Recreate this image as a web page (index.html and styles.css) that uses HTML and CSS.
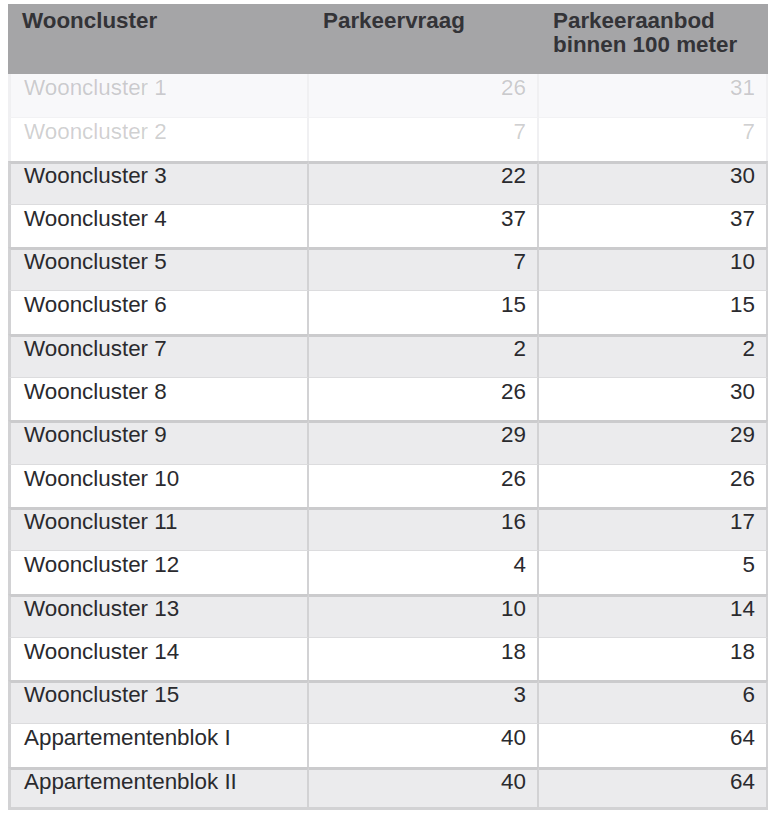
FILE: index.html
```html
<!DOCTYPE html>
<html lang="nl">
<head>
<meta charset="utf-8">
<title>Parkeervraag per wooncluster</title>
<link rel="stylesheet" href="styles.css">
</head>
<body>
<table class="parking">
  <colgroup>
    <col class="c-name">
    <col class="c-demand">
    <col class="c-supply">
  </colgroup>
  <thead>
    <tr>
      <th class="name">Wooncluster</th>
      <th class="name">Parkeervraag</th>
      <th class="name">Parkeeraanbod<br>binnen 100 meter</th>
    </tr>
  </thead>
  <tbody>
    <tr class="gray faded"><td>Wooncluster 1</td><td class="num">26</td><td class="num">31</td></tr>
    <tr class="white faded"><td>Wooncluster 2</td><td class="num">7</td><td class="num">7</td></tr>
    <tr class="gray"><td>Wooncluster 3</td><td class="num">22</td><td class="num">30</td></tr>
    <tr class="white"><td>Wooncluster 4</td><td class="num">37</td><td class="num">37</td></tr>
    <tr class="gray"><td>Wooncluster 5</td><td class="num">7</td><td class="num">10</td></tr>
    <tr class="white"><td>Wooncluster 6</td><td class="num">15</td><td class="num">15</td></tr>
    <tr class="gray"><td>Wooncluster 7</td><td class="num">2</td><td class="num">2</td></tr>
    <tr class="white"><td>Wooncluster 8</td><td class="num">26</td><td class="num">30</td></tr>
    <tr class="gray"><td>Wooncluster 9</td><td class="num">29</td><td class="num">29</td></tr>
    <tr class="white"><td>Wooncluster 10</td><td class="num">26</td><td class="num">26</td></tr>
    <tr class="gray"><td>Wooncluster 11</td><td class="num">16</td><td class="num">17</td></tr>
    <tr class="white"><td>Wooncluster 12</td><td class="num">4</td><td class="num">5</td></tr>
    <tr class="gray"><td>Wooncluster 13</td><td class="num">10</td><td class="num">14</td></tr>
    <tr class="white"><td>Wooncluster 14</td><td class="num">18</td><td class="num">18</td></tr>
    <tr class="gray"><td>Wooncluster 15</td><td class="num">3</td><td class="num">6</td></tr>
    <tr class="white"><td>Appartementenblok I</td><td class="num">40</td><td class="num">64</td></tr>
    <tr class="gray"><td>Appartementenblok II</td><td class="num">40</td><td class="num">64</td></tr>
  </tbody>
</table>
</body>
</html>
```

FILE: styles.css
```css
html, body {
  margin: 0;
  padding: 0;
  background: #ffffff;
}

body {
  padding: 4px 7px 0 8px;
  font-family: "Liberation Sans", Arial, sans-serif;
  color: #2a2a2e;
}

.parking {
  width: 760px;
  border-collapse: separate;
  border-spacing: 0;
  table-layout: fixed;
  font-size: 22.4px;
  line-height: 24px;
}

.c-name { width: 301px; }
.c-demand { width: 230px; }
.c-supply { width: 229px; }

.parking th {
  height: 70px;
  box-sizing: border-box;
  background: #a5a5a7;
  color: #333337;
  font-weight: bold;
  text-align: left;
  vertical-align: top;
  padding: 5px 14px 0 14px;
}

.parking td {
  box-sizing: border-box;
  height: 43.3px;
  vertical-align: top;
  padding: 2px 11px 0 13px;
  border-right: 2px solid #d2d2d4;
  white-space: nowrap;
}

.parking td:first-child {
  border-left: 3px solid #d2d2d4;
}

.parking td.num {
  text-align: right;
}

.parking tr.gray td {
  background: #ebebed;
  border-top: 3px solid #cbcbcd;
  padding-top: 0;
}

.parking tr.white td {
  background: #ffffff;
  border-top: 1px solid #dcdcde;
}

.parking tbody tr:first-child td {
  border-top: 0;
  padding-top: 2px;
}

.parking tbody tr:last-child td {
  border-bottom: 3px solid #d2d2d4;
}

.parking tr.faded td {
  color: rgba(42, 42, 46, 0.22);
  border-right-color: #f0f0f2;
  border-left-color: #f0f0f2;
}

.parking tr.faded.gray td {
  background: #f8f8fa;
}

.parking tr.faded.white td {
  border-top-color: #f2f2f4;
}
```
